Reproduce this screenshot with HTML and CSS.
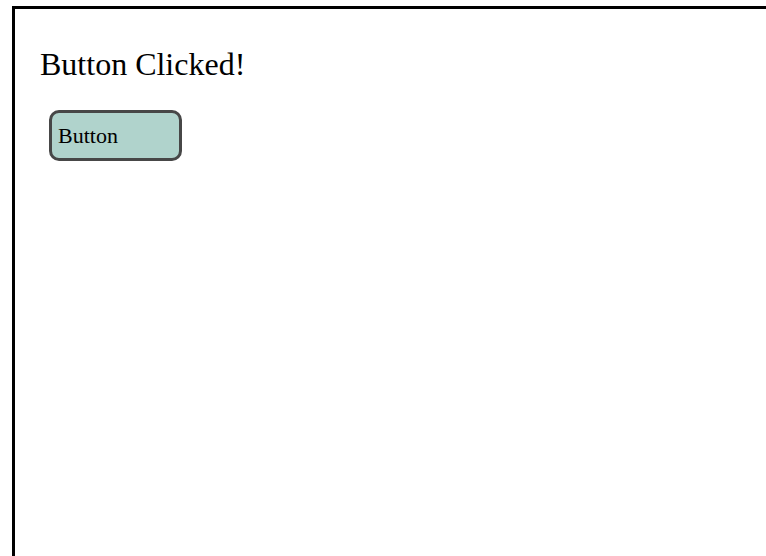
FILE: index.html
```html
<!DOCTYPE html>
<html>
<head>
<meta charset="utf-8">
<link rel="stylesheet" href="styles.css">
</head>
<body>
<div class="frame">
  <h1 class="title">Button Clicked!</h1>
  <button class="btn">Button</button>
</div>
</body>
</html>
```
FILE: styles.css
```css
html, body {
  margin: 0;
  padding: 0;
  background: #fff;
  overflow: hidden;
}
body {
  font-family: "Liberation Serif", "Times New Roman", serif;
  color: #000;
}
.frame {
  margin: 6px 0 0 12px;
  border-top: 3px solid #000;
  border-left: 3px solid #000;
  height: 550px;
  padding: 0 0 0 25px;
  box-sizing: border-box;
}
.title {
  font-size: 32px;
  font-weight: normal;
  margin: 0;
  padding-top: 37px;
  line-height: 37px;
}
.btn {
  display: block;
  margin: 27px 0 0 9px;
  width: 133px;
  height: 51px;
  box-sizing: border-box;
  border: 3px solid #474747;
  border-radius: 10px;
  background: #b0d3cc;
  font-family: "Liberation Serif", "Times New Roman", serif;
  font-size: 22px;
  text-align: left;
  padding: 0 0 0 6px;
  color: #000;
}
```
